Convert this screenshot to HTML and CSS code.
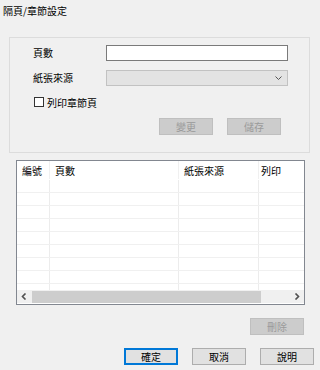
FILE: index.html
```html
<!DOCTYPE html>
<html lang="zh-Hant">
<head>
<meta charset="utf-8">
<link rel="stylesheet" href="styles.css">
</head>
<body>
<div class="dialog">
  <div class="title">隔頁/章節設定</div>
  <div class="group">
    <div class="row">
      <span class="label">頁數</span>
      <div class="input"></div>
    </div>
    <div class="row row-select">
      <span class="label">紙張來源</span>
      <div class="select">
        <svg class="chev" width="7" height="4" viewBox="0 0 7 4"><path d="M0.5 0.5 L3.5 3.5 L6.5 0.5" fill="none" stroke="#555" stroke-width="1"/></svg>
      </div>
    </div>
    <div class="row row-check">
      <span class="box"></span>
      <span class="check-label">列印章節頁</span>
    </div>
    <div class="row row-buttons">
      <span class="btn disabled">變更</span>
      <span class="btn disabled">儲存</span>
    </div>
  </div>

  <div class="table">
    <div class="thead">
      <div class="c c1">編號</div>
      <div class="c c2">頁數</div>
      <div class="c c3">紙張來源</div>
      <div class="c c4">列印</div>
    </div>
    <div class="tbody">
      <div class="tr"><div class="c c1"></div><div class="c c2"></div><div class="c c3"></div><div class="c c4"></div></div>
      <div class="tr"><div class="c c1"></div><div class="c c2"></div><div class="c c3"></div><div class="c c4"></div></div>
      <div class="tr"><div class="c c1"></div><div class="c c2"></div><div class="c c3"></div><div class="c c4"></div></div>
      <div class="tr"><div class="c c1"></div><div class="c c2"></div><div class="c c3"></div><div class="c c4"></div></div>
      <div class="tr"><div class="c c1"></div><div class="c c2"></div><div class="c c3"></div><div class="c c4"></div></div>
      <div class="tr"><div class="c c1"></div><div class="c c2"></div><div class="c c3"></div><div class="c c4"></div></div>
      <div class="tr"><div class="c c1"></div><div class="c c2"></div><div class="c c3"></div><div class="c c4"></div></div>
      <div class="tr"><div class="c c1"></div><div class="c c2"></div><div class="c c3"></div><div class="c c4"></div></div>
      <div class="tr"><div class="c c1"></div><div class="c c2"></div><div class="c c3"></div><div class="c c4"></div></div>
    </div>
    <div class="hscroll">
      <span class="arrow"><svg width="6" height="7" viewBox="0 0 6 7"><path d="M4.5 0.5 L1.5 3.5 L4.5 6.5" fill="none" stroke="#505050" stroke-width="1.6"/></svg></span>
      <div class="track"><div class="thumb"></div></div>
      <span class="arrow"><svg width="6" height="7" viewBox="0 0 6 7"><path d="M1.5 0.5 L4.5 3.5 L1.5 6.5" fill="none" stroke="#505050" stroke-width="1.6"/></svg></span>
    </div>
  </div>

  <div class="del-row">
    <span class="btn disabled">刪除</span>
  </div>
  <div class="footer">
    <span class="btn primary">確定</span>
    <span class="btn">取消</span>
    <span class="btn">說明</span>
  </div>
</div>
</body>
</html>
```

FILE: styles.css
```css
* { box-sizing: border-box; }
html, body {
  margin: 0;
  padding: 0;
  background: #f0f0f0;
}
body {
  width: 320px;
  height: 370px;
  overflow: hidden;
  font-family: "Noto Sans CJK TC", "Noto Sans", sans-serif;
  font-size: 10px;
  color: #000;
}
.dialog {
  display: flex;
  flex-direction: column;
}
.title {
  height: 37px;
  padding: 3px 0 0 3px;
  line-height: 16px;
}
.group {
  margin-left: 9px;
  width: 301px;
  height: 116px;
  border: 1px solid #dcdcdc;
  padding: 7px 0 0 23px;
  display: flex;
  flex-direction: column;
}
.row {
  display: flex;
  align-items: center;
  height: 16px;
}
.label {
  width: 73px;
  line-height: 16px;
}
.input {
  width: 182px;
  height: 16px;
  background: #fff;
  border: 1px solid #7a7a7a;
}
.row-select { margin-top: 9px; }
.select {
  width: 182px;
  height: 16px;
  background: #e3e3e3;
  border: 1px solid #c2c2c2;
  display: flex;
  align-items: center;
  justify-content: flex-end;
  padding-right: 5px;
}
.row-check {
  margin-top: 10px;
  height: 12px;
}
.box {
  width: 10px;
  height: 10px;
  border: 1px solid #333;
  background: #fff;
  margin-left: 1px;
  margin-right: 3px;
}
.row-buttons {
  margin-top: 10px;
  height: 17px;
  padding-left: 126px;
  gap: 14px;
}
.btn {
  width: 54px;
  height: 17px;
  display: flex;
  align-items: center;
  justify-content: center;
  background: #e1e1e1;
  border: 1px solid #adadad;
  line-height: 15px;
}
.btn.disabled {
  background: #cccccc;
  border-color: #bfbfbf;
  color: #9a9a9a;
}
.btn.primary {
  border: 2px solid #0078d7;
}
.table {
  margin: 7px 0 0 16px;
  width: 289px;
  height: 145px;
  border: 1px solid #828790;
  background: #fff;
  display: flex;
  flex-direction: column;
  overflow: hidden;
}
.thead {
  display: flex;
  height: 19px;
  flex-shrink: 0;
}
.thead .c {
  padding: 3px 0 0 5px;
  line-height: 14px;
  border-right: 1px solid #f0f0f0;
  margin-bottom: 1px;
}
.c1 { width: 33px; flex-shrink: 0; }
.c2 { width: 129px; flex-shrink: 0; }
.c3 { width: 80px; flex-shrink: 0; }
.c4 { flex: 1; }
.thead .c4 { border-right: none; padding-left: 2px; }
.thead .c3 { padding-left: 5px; }
.tbody {
  height: 110px;
  overflow: hidden;
  flex-shrink: 0;
}
.tr {
  display: flex;
  height: 13px;
  border-bottom: 1px solid #f0f0f0;
}
.tr .c { border-right: 1px solid #ececec; }
.tr .c4 { border-right: none; }
.hscroll {
  height: 13px;
  display: flex;
  align-items: center;
  background: #f0f0f0;
  flex-shrink: 0;
}
.arrow {
  width: 14px;
  height: 13px;
  display: flex;
  align-items: center;
  justify-content: center;
}
.track {
  flex: 1;
  height: 13px;
  display: flex;
  align-items: center;
}
.thumb {
  margin-left: 1px;
  width: 229px;
  height: 12px;
  background: #cdcdcd;
}
.del-row {
  display: flex;
  justify-content: flex-end;
  padding-right: 16px;
  margin-top: 13px;
}
.footer {
  display: flex;
  justify-content: flex-end;
  gap: 14px;
  padding-right: 6px;
  margin-top: 13px;
}
```
